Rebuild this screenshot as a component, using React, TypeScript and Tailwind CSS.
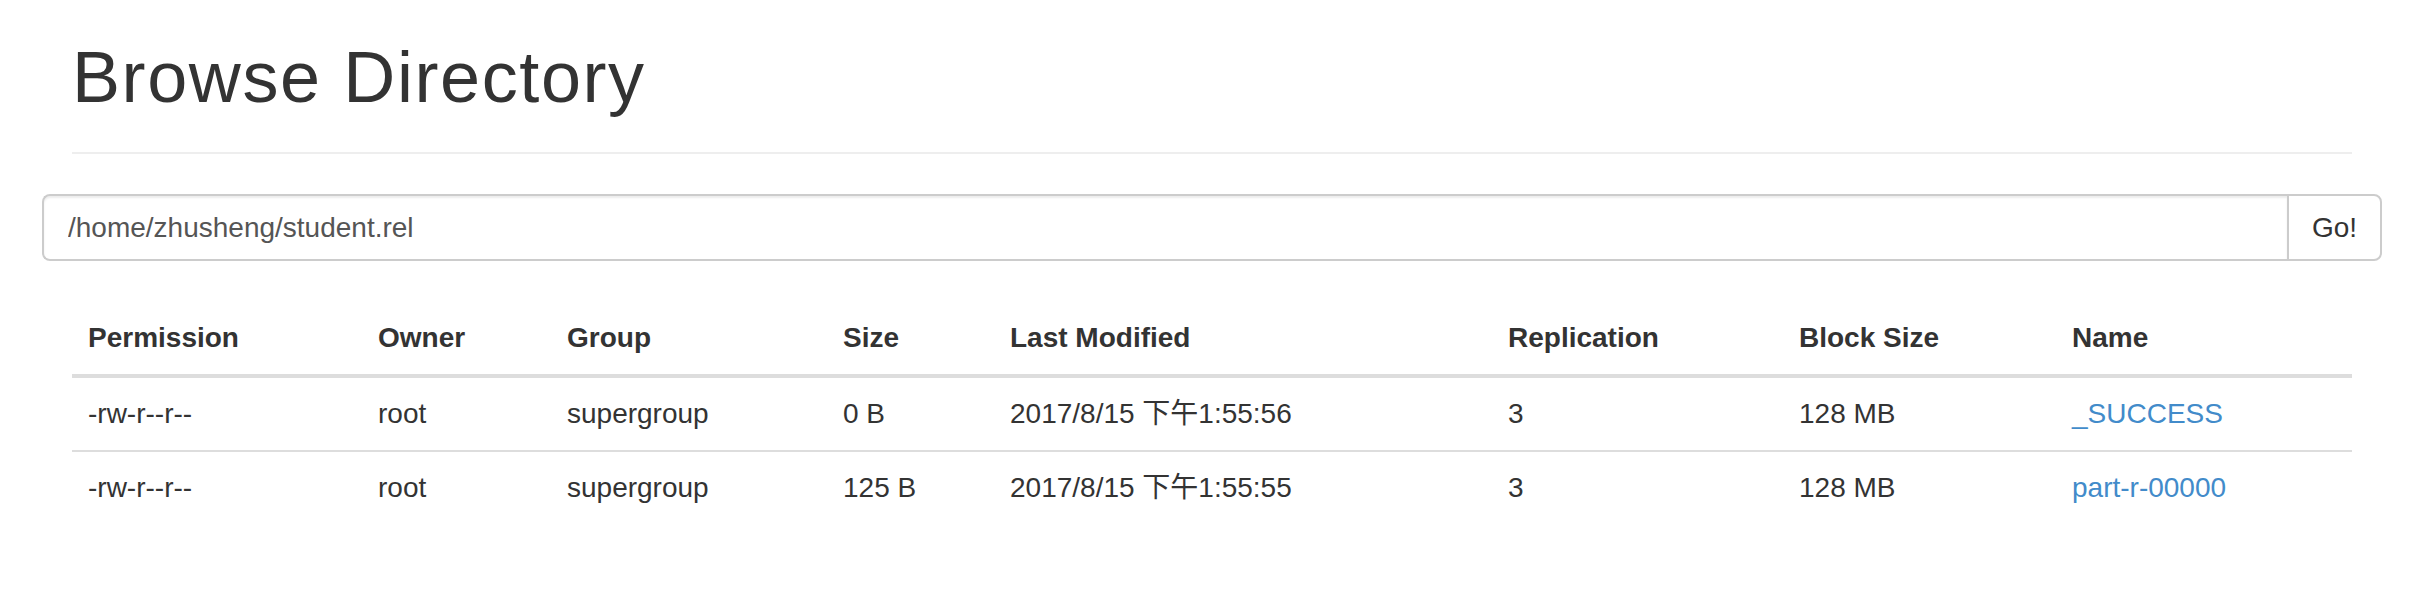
const columns = [
  { label: 'Permission', width: 'w-[290px]' },
  { label: 'Owner', width: 'w-[189px]' },
  { label: 'Group', width: 'w-[276px]' },
  { label: 'Size', width: 'w-[167px]' },
  { label: 'Last Modified', width: 'w-[498px]' },
  { label: 'Replication', width: 'w-[291px]' },
  { label: 'Block Size', width: 'w-[273px]' },
  { label: 'Name', width: 'w-[296px]' },
];

const files = [
  {
    permission: '-rw-r--r--',
    owner: 'root',
    group: 'supergroup',
    size: '0 B',
    modified: '2017/8/15 下午1:55:56',
    replication: 3,
    blockSize: '128 MB',
    name: '_SUCCESS',
  },
  {
    permission: '-rw-r--r--',
    owner: 'root',
    group: 'supergroup',
    size: '125 B',
    modified: '2017/8/15 下午1:55:55',
    replication: 3,
    blockSize: '128 MB',
    name: 'part-r-00000',
  },
];

export default function App() {
  return (
    <div className="min-h-[602px] bg-white font-['Liberation_Sans','Noto_Sans_CJK_SC',sans-serif] text-[#333]">
      <div className="w-[2280px] ml-[72px]">
        <div className="pt-[37px] pb-[35px] border-b-2 border-[#eee]">
          <h1 className="text-[72px] leading-[80px] font-normal tracking-[1.6px]">Browse Directory</h1>
        </div>

        <form className="flex mt-[40px] -mx-[30px]" onSubmit={(e) => e.preventDefault()}>
          <input
            type="text"
            defaultValue="/home/zhusheng/student.rel"
            className="flex-1 h-[67px] px-[24px] border-2 border-r-0 border-[#ccc] rounded-l-[8px] text-[28px] text-[#555] outline-none shadow-[inset_0_2px_2px_rgba(0,0,0,0.075)]"
          />
          <button
            type="submit"
            className="w-[95px] h-[67px] flex items-center justify-center border-2 border-[#ccc] rounded-r-[8px] bg-white text-[28px] text-[#333]"
          >
            Go!
          </button>
        </form>

        <table className="mt-[41px] w-[2280px] table-fixed border-separate border-spacing-0 text-[28px] leading-[40px]">
          <thead>
            <tr>
              {columns.map((col) => (
                <th
                  key={col.label}
                  className={`${col.width} p-[16px] text-left font-bold align-bottom border-b-4 border-[#ddd]`}
                >
                  {col.label}
                </th>
              ))}
            </tr>
          </thead>
          <tbody>
            {files.map((f, index) => {
              const cell = index === 0 ? 'p-[16px]' : 'p-[16px] border-t-2 border-[#ddd]';
              return (
                <tr key={f.name}>
                  <td className={cell}>{f.permission}</td>
                  <td className={cell}>{f.owner}</td>
                  <td className={cell}>{f.group}</td>
                  <td className={cell}>{f.size}</td>
                  <td className={cell}>{f.modified}</td>
                  <td className={cell}>{f.replication}</td>
                  <td className={cell}>{f.blockSize}</td>
                  <td className={cell}>
                    <a href="#" className="text-[#428bca]">
                      {f.name}
                    </a>
                  </td>
                </tr>
              );
            })}
          </tbody>
        </table>
      </div>
    </div>
  );
}
